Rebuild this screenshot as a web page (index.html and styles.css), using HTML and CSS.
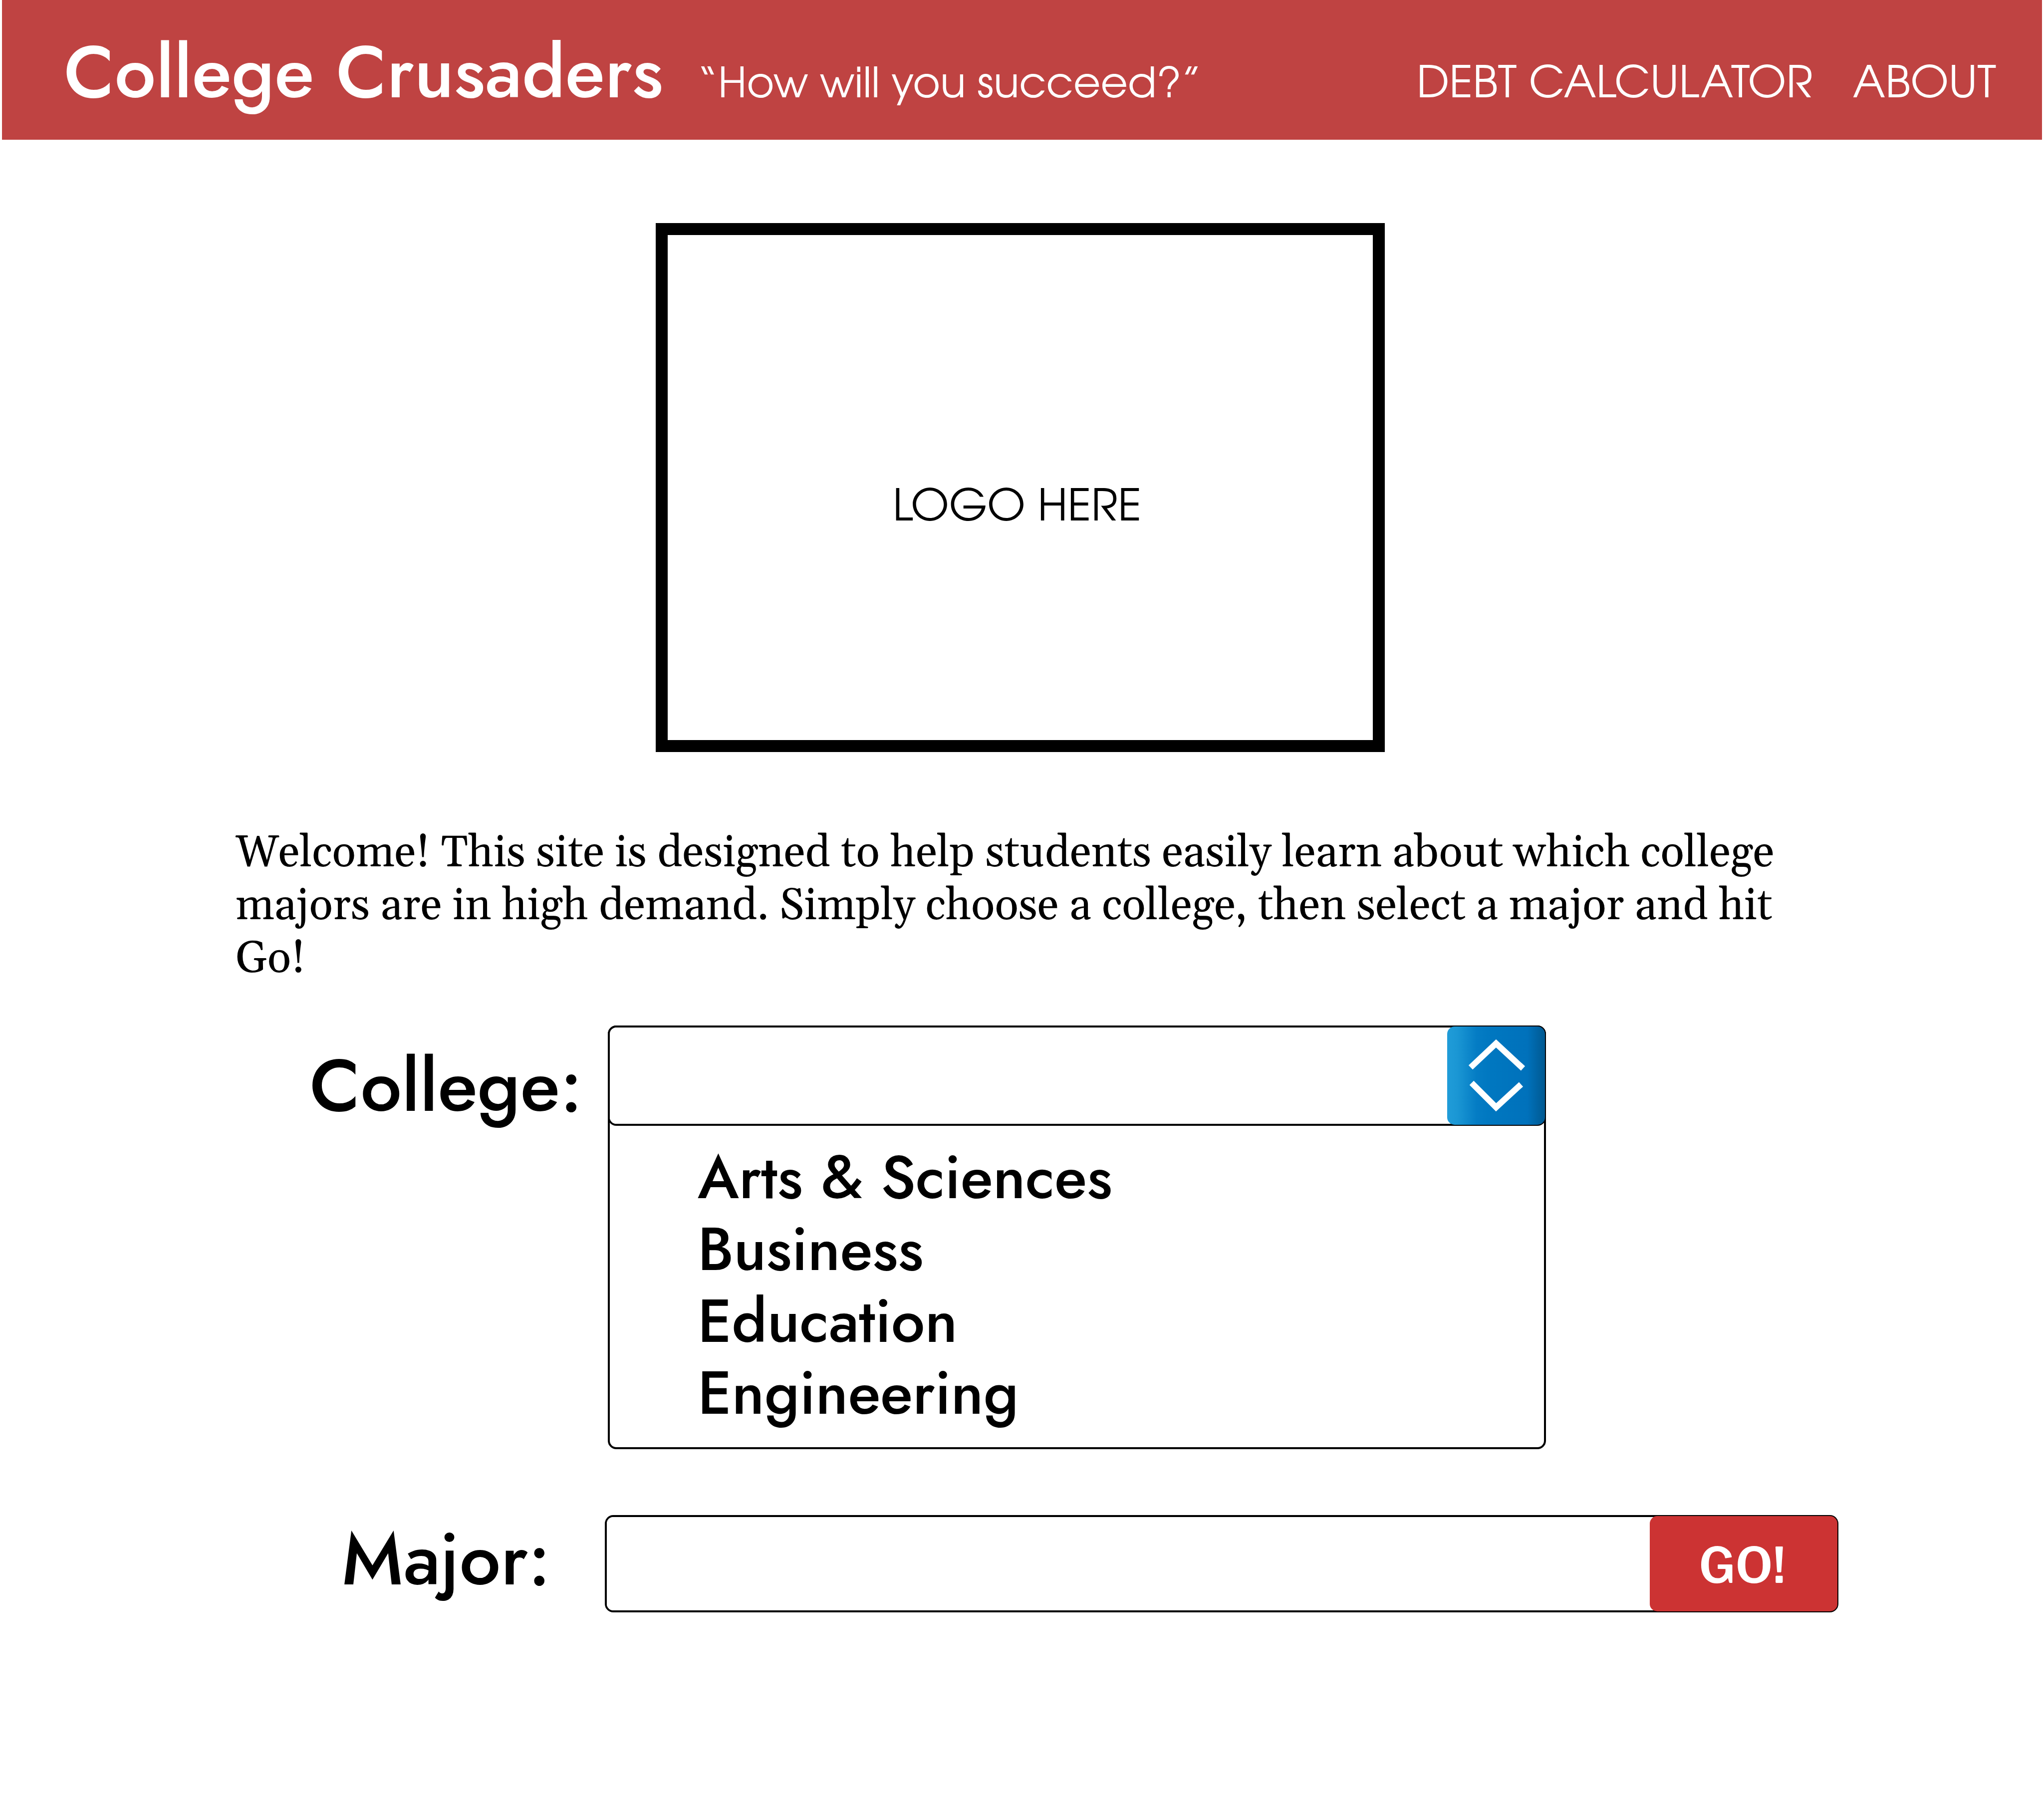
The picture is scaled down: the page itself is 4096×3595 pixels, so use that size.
FILE: index.html
```html
<!DOCTYPE html>
<html lang="en">
<head>
<meta charset="utf-8">
<meta name="viewport" content="width=device-width, initial-scale=1">
<title>College Crusaders</title>
<link rel="stylesheet" href="styles.css">
</head>
<body>
<header class="site-header">
  <h1 class="site-title">College Crusaders</h1>
  <p class="tagline">“How will you succeed?”</p>
  <nav class="site-nav">
    <a href="#debt-calculator">DEBT CALCULATOR</a>
    <a href="#about">ABOUT</a>
  </nav>
</header>
<main class="content">
  <div class="logo-box">LOGO HERE</div>
  <p class="intro">Welcome! This site is designed to help students easily learn about which college majors are in high demand. Simply choose a college, then select a major and hit Go!</p>
  <form class="finder">
    <div class="row">
      <label class="row-label row-label-college" for="college">College:</label>
      <div class="combo">
        <div class="field field-college">
          <select class="control" id="college" name="college">
            <option value="" selected></option>
            <option>Arts &amp; Sciences</option>
            <option>Business</option>
            <option>Education</option>
            <option>Engineering</option>
          </select>
          <button class="toggle" type="button" aria-label="Show colleges">
            <svg class="toggle-icon" viewBox="0 0 196 197" aria-hidden="true">
              <path d="M47 82 98 34l54 50M49 113l49 49 50-46"/>
            </svg>
          </button>
        </div>
        <ul class="options">
          <li>Arts &amp; Sciences</li>
          <li>Business</li>
          <li>Education</li>
          <li>Engineering</li>
        </ul>
      </div>
    </div>
    <div class="row">
      <label class="row-label" for="major">Major:</label>
      <div class="field field-major">
        <input class="control" id="major" name="major" type="text">
        <button class="go" type="submit">GO!</button>
      </div>
    </div>
  </form>
</main>
</body>
</html>
```
FILE: styles.css
```css
:root {
  --display: Jost, "Futura PT", Futura, Lato, sans-serif;
  --gothic: "TeX Gyre Adventor", "Century Gothic", Lato, sans-serif;
  --serif: Gelasio, Georgia, "Liberation Serif", serif;
  --grotesque: "Libre Franklin", "Franklin Gothic Demi", Roboto, sans-serif;
}

* {
  box-sizing: border-box;
}

body {
  margin: 0;
  background: #fff;
  color: #000;
}

h1,
p,
ul {
  margin: 0;
  padding: 0;
}

.site-header {
  display: flex;
  align-items: baseline;
  height: 280px;
  margin: 0 4px;
  padding: 44px 92px 0 124px;
  background: #bf4342;
  color: #fff;
  font-family: var(--gothic);
}

.site-title {
  font: 500 147px/200px var(--display);
}

.tagline {
  margin-left: 68px;
  font-size: 84px;
}

.site-nav {
  display: flex;
  gap: 80px;
  margin-left: auto;
  font-size: 88px;
}

.site-nav a {
  color: inherit;
  text-decoration: none;
}

.content {
  padding-right: 8px;
}

.logo-box {
  display: flex;
  align-items: center;
  justify-content: center;
  width: 1461px;
  max-width: 100%;
  height: 1060px;
  margin: 167px auto 0;
  padding: 84px 12px 0 0;
  border: 24px solid #000;
  font: 400 88px/120px var(--gothic);
}

.intro {
  margin: 150px 464px 0 472px;
  font: 400 88px/106px var(--serif);
}

.finder {
  display: flex;
  flex-direction: column;
  gap: 132px;
  margin: 80px 404px 0 612px;
}

.row {
  display: grid;
  grid-template-columns: 564px 1fr;
  column-gap: 36px;
  align-items: start;
}

.row-label {
  font: 500 147px/176px var(--display);
  text-align: center;
}

.row-label-college {
  padding-top: 32px;
}

.combo {
  width: 1880px;
  margin-left: 6px;
  border: 4px solid #000;
  border-radius: 17px;
}

.field {
  display: flex;
  border: 4px solid #000;
  border-radius: 17px;
}

.field-college {
  height: 201px;
  margin: -4px;
}

.field-major {
  height: 195px;
}

.control {
  flex: 1;
  min-width: 0;
  padding: 0 40px;
  border: 0;
  border-radius: 13px;
  background: #fff;
  font: 500 120px/144px var(--display);
  appearance: none;
}

.toggle,
.go {
  flex: none;
  margin: -2px;
  padding: 0;
  border: 0;
  border-radius: 15px;
  color: #fff;
}

.toggle {
  width: 196px;
  background: linear-gradient(90deg, #209cd8 0%, #1b97d4 10%, #047cc4 30%, #0077c0 45%, #0071bb 82%, #005a93 99%);
}

.toggle-icon {
  display: block;
  width: 100%;
  fill: none;
  stroke: #fff;
  stroke-width: 12;
}

.go {
  width: 376px;
  padding: 6px 6px 0 0;
  background: #cc3333;
  font: 600 98px/120px var(--grotesque);
}

.options {
  padding: 36px 176px;
  list-style: none;
  font: 500 120px/144px var(--display);
}
```
